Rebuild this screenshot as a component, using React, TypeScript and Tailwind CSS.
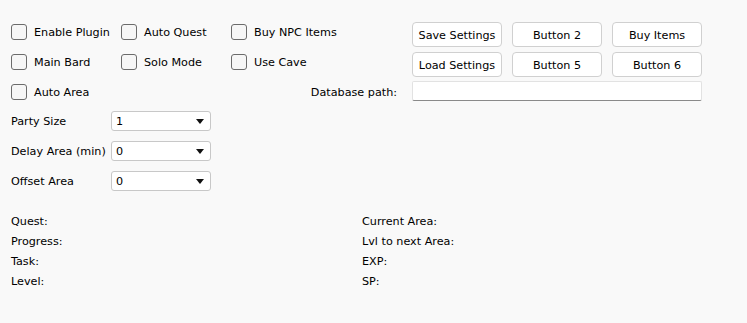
import React from 'react';

const Check = ({ label }: { label: string }) => (
  <div className="flex w-[110px] items-center gap-[7px] pt-[1px]">
    <span className="h-[16px] w-[16px] shrink-0 rounded-[3px] border border-[#6b6b6b] bg-[#f6f6f6]" />
    <span className="pt-[2px] leading-[16px]">{label}</span>
  </div>
);

const Btn = ({ label }: { label: string }) => (
  <button className="h-[25px] w-[90px] rounded-[4px] border border-[#d0d0d0] bg-white pt-[2px] text-center leading-[21px] text-black">
    {label}
  </button>
);

const Select = ({ label, value }: { label: string; value: string }) => (
  <div className="flex h-[30px] items-start">
    <span className="w-[100px] pt-[3px] leading-[16px]">{label}</span>
    <div className="flex h-[20px] w-[100px] items-center justify-between rounded-[3px] border border-[#c8c8c8] bg-white pl-[4px] pr-[6px]">
      <span className="pt-[2px]">{value}</span>
      <svg width="8" height="5" viewBox="0 0 8 5">
        <path d="M0 0h8L4 5z" fill="#111" />
      </svg>
    </div>
  </div>
);

export default function App() {
  return (
    <div
      className="h-[323px] w-[747px] bg-[#f9f9f9] pl-[11px] pt-[22px] text-[11.2px] text-black"
      style={{ fontFamily: '"DejaVu Sans", Tahoma, sans-serif' }}
    >
      {/* checkbox rows with buttons on the right */}
      <div className="flex h-[30px] items-start">
        <Check label="Enable Plugin" />
        <Check label="Auto Quest" />
        <Check label="Buy NPC Items" />
        <div className="ml-[71px] flex gap-[10px]">
          <Btn label="Save Settings" />
          <Btn label="Button 2" />
          <Btn label="Buy Items" />
        </div>
      </div>
      <div className="flex h-[30px] items-start">
        <Check label="Main Bard" />
        <Check label="Solo Mode" />
        <Check label="Use Cave" />
        <div className="ml-[71px] flex gap-[10px]">
          <Btn label="Load Settings" />
          <Btn label="Button 5" />
          <Btn label="Button 6" />
        </div>
      </div>
      <div className="flex h-[29px] items-start">
        <Check label="Auto Area" />
        <div className="w-[291px] pr-[15px] pt-[3px] text-right leading-[16px]">Database path:</div>
        <div className="-mt-[1px] h-[20px] w-[290px] rounded-[2px] border border-[#e2e2e2] border-b-[#8a8a8a] bg-white" />
      </div>

      {/* dropdowns */}
      <Select label="Party Size" value="1" />
      <Select label="Delay Area (min)" value="0" />
      <Select label="Offset Area" value="0" />

      {/* status */}
      <div className="mt-[11px] grid grid-cols-[351px_1fr] leading-[20px]">
        <span>Quest:</span>
        <span>Current Area:</span>
        <span>Progress:</span>
        <span>Lvl to next Area:</span>
        <span>Task:</span>
        <span>EXP:</span>
        <span>Level:</span>
        <span>SP:</span>
      </div>
    </div>
  );
}
